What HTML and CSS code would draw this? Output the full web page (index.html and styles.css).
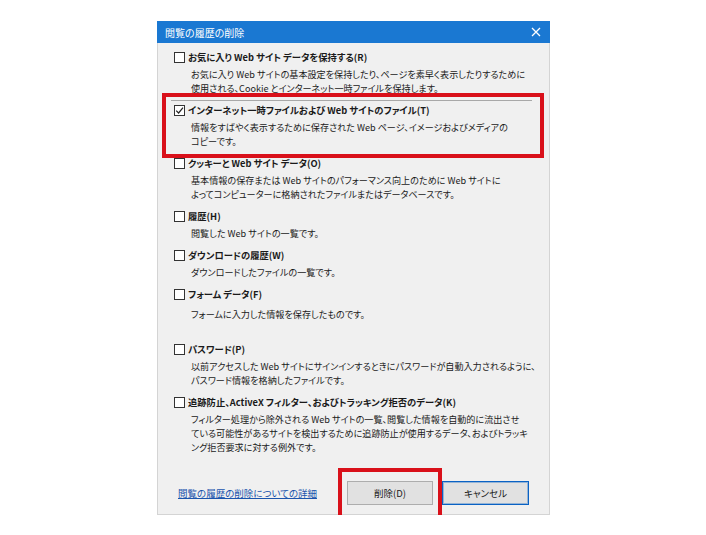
FILE: index.html
```html
<!DOCTYPE html>
<html lang="ja">
<head>
  <meta charset="UTF-8">
  <title>閲覧の履歴の削除</title>
  <link rel="stylesheet" href="styles.css">
</head>
<body>
  <div class="page">
    <div class="dialog">
      <div class="titlebar">
        <span class="title">閲覧の履歴の削除</span>
        <svg class="close" width="10" height="10" viewBox="0 0 10 10">
          <path d="M1 1 L9 9 M9 1 L1 9" stroke="#fff" stroke-width="1.3" fill="none"/>
        </svg>
      </div>

      <div class="content">
        <div class="item">
          <div class="label"><span class="box"></span>お気に入り Web サイト データを保持する(R)</div>
          <div class="desc">お気に入り Web サイトの基本設定を保持したり、ページを素早く表示したりするために<br>使用される、Cookie とインターネット一時ファイルを保持します。</div>
        </div>
        <div class="item focused">
          <div class="label">
            <span class="box">
              <svg width="9" height="9" viewBox="0 0 9 9"><path d="M1.2 4.6 L3.6 7 L8 1.6" stroke="#222" stroke-width="1.2" fill="none"/></svg>
            </span>インターネット一時ファイルおよび Web サイトのファイル(T)
          </div>
          <div class="desc">情報をすばやく表示するために保存された Web ページ、イメージおよびメディアの<br>コピーです。</div>
        </div>
        <div class="item">
          <div class="label"><span class="box"></span>クッキーと Web サイト データ(O)</div>
          <div class="desc">基本情報の保存または Web サイトのパフォーマンス向上のために Web サイトに<br>よってコンピューターに格納されたファイルまたはデータベースです。</div>
        </div>
        <div class="item">
          <div class="label"><span class="box"></span>履歴(H)</div>
          <div class="desc">閲覧した Web サイトの一覧です。</div>
        </div>
        <div class="item">
          <div class="label"><span class="box"></span>ダウンロードの履歴(W)</div>
          <div class="desc">ダウンロードしたファイルの一覧です。</div>
        </div>
        <div class="item">
          <div class="label"><span class="box"></span>フォーム データ(F)</div>
          <div class="desc spaced">フォームに入力した情報を保存したものです。</div>
        </div>
        <div class="item far">
          <div class="label"><span class="box"></span>パスワード(P)</div>
          <div class="desc">以前アクセスした Web サイトにサインインするときにパスワードが自動入力されるように、<br>パスワード情報を格納したファイルです。</div>
        </div>
        <div class="item">
          <div class="label"><span class="box"></span>追跡防止、ActiveX フィルター、およびトラッキング拒否のデータ(K)</div>
          <div class="desc">フィルター処理から除外される Web サイトの一覧、閲覧した情報を自動的に流出させ<br>ている可能性があるサイトを検出するために追跡防止が使用するデータ、およびトラッキ<br>ング拒否要求に対する例外です。</div>
        </div>
      </div>

      <div class="footer">
        <a class="link" href="#">閲覧の履歴の削除についての詳細</a>
        <div class="buttons">
          <button class="btn">削除(D)</button>
          <button class="btn default">キャンセル</button>
        </div>
      </div>

      <div class="mark mark-item"></div>
      <div class="mark mark-btn"></div>
    </div>
  </div>
</body>
</html>
```

FILE: styles.css
```css
body {
  margin: 0;
  background: #fff;
  font-family: "Noto Sans CJK JP", "Noto Sans", sans-serif;
  color: #1a1a1a;
}
.page {
  padding: 21px 0 0 157px;
}
.dialog {
  position: relative;
  width: 393px;
  height: 494px;
  box-sizing: border-box;
  background: #f0f0f0;
  border: 1px solid #d4d4d4;
  border-top: none;
}
.titlebar {
  display: flex;
  align-items: center;
  justify-content: space-between;
  height: 22px;
  margin: 0 -1px;
  padding: 0 9px 0 8px;
  background: #1a78d2;
}
.title {
  color: #fff;
  font-size: 10px;
  font-feature-settings: "palt";
}
.content {
  padding: 6px 0 0 16px;
  font-feature-settings: "palt";
}
.item {
  margin-bottom: 7px;
}
.item.far {
  margin-top: 20px;
}
.label {
  display: flex;
  align-items: center;
  height: 16px;
  font-size: 9.3px;
  font-weight: bold;
  white-space: nowrap;
}
.box {
  display: flex;
  align-items: center;
  justify-content: center;
  width: 9px;
  height: 9px;
  margin-right: 3px;
  border: 1px solid #333;
  background: #fff;
}
.desc {
  margin: 2px 0 0 17px;
  font-size: 9.1px;
  line-height: 14px;
  white-space: nowrap;
}
.desc.spaced {
  margin-top: 5px;
}
.focused {
  position: relative;
}
.focused::before {
  content: "";
  position: absolute;
  left: -3px;
  right: 17px;
  top: -2px;
  border-top: 1px solid #a8a8a8;
}
.footer {
  display: flex;
  align-items: center;
  justify-content: space-between;
  margin-top: 27px;
  padding: 0 20px 0 20px;
}
.link {
  color: #1a54ad;
  font-size: 9.5px;
  font-feature-settings: "palt";
}
.buttons {
  display: flex;
  gap: 9px;
}
.btn {
  width: 86px;
  height: 24px;
  padding: 0;
  font-family: inherit;
  font-size: 9.5px;
  color: #1a1a1a;
  background: #e1e1e1;
  border: 1px solid #adadad;
  font-feature-settings: "palt";
}
.btn.default {
  width: 87px;
  border-color: #0a62c4;
  box-shadow: inset 0 0 0 1px rgba(10, 98, 196, 0.35);
}
.mark {
  position: absolute;
  border: 4px solid #d9101a;
  box-sizing: border-box;
}
.mark-item {
  left: 4px;
  top: 72px;
  width: 382px;
  height: 65px;
}
.mark-btn {
  left: 180px;
  top: 447px;
  width: 104px;
  height: 54px;
}
```
